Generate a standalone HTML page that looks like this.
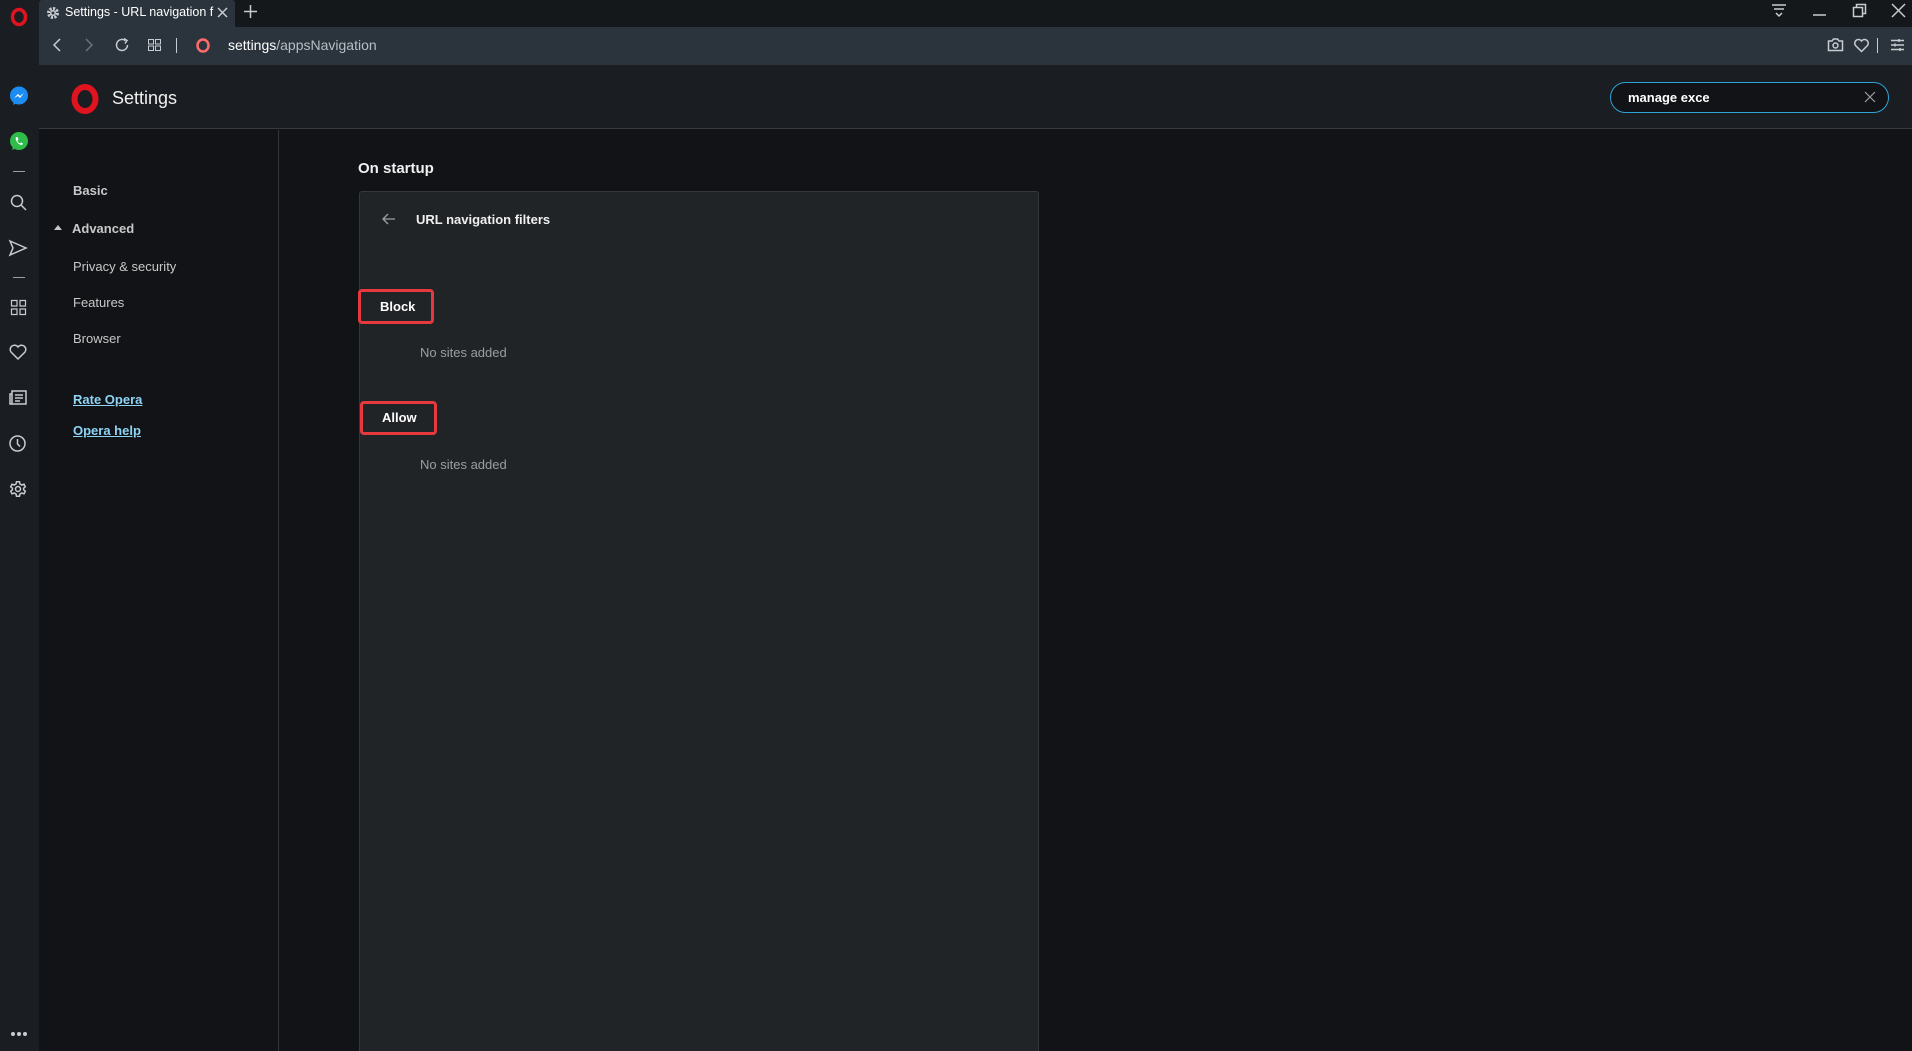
<!DOCTYPE html>
<html style="background:#111316"><head><meta charset="utf-8"><style>
*{margin:0;padding:0;box-sizing:border-box}
body{width:1912px;height:1051px;overflow:hidden;background:#111316;font-family:"Liberation Sans",sans-serif;color:#e8e8e8;position:relative}
.a{position:absolute}
svg{position:absolute;overflow:visible}
.ic{stroke:#c8ccd0;fill:none;stroke-width:1.5}
.nav{position:absolute;left:73px;font-size:13px;color:#c8c8c8;font-weight:bold}
.lnk{color:#8fd3f5;text-decoration:underline}
.box{position:absolute;border:3px solid #e5393e;border-radius:4px;font-size:13px;font-weight:bold;color:#fff;padding-left:19px;line-height:27px}
.ns{position:absolute;left:420px;font-size:13px;color:#9a9ea2}
</style></head><body>
<div class="a" style="left:0;top:0;width:39px;height:1051px;background:#1a1d21"></div>
<div class="a" style="left:39px;top:0;width:1873px;height:27px;background:#15181b"></div>
<div class="a" style="left:39px;top:0;width:196px;height:27px;background:#2b343d;border-radius:3px 3px 0 0"></div>
<svg style="left:46px;top:6px" width="14" height="14" viewBox="0 0 14 14"><circle cx="7" cy="7" r="4.5" fill="none" stroke="#c8ccd0" stroke-width="3" stroke-dasharray="2.2 1.3"/><circle cx="7" cy="7" r="3" fill="#c8ccd0"/><circle cx="7" cy="7" r="1.5" fill="#2b343d"/></svg>
<div class="a" style="left:65px;top:5px;font-size:12.5px;color:#fff;white-space:nowrap;width:150px;overflow:hidden">Settings - URL navigation f</div>
<svg style="left:217px;top:7px" width="11" height="11"><path d="M1 1L10 10M10 1L1 10" class="ic"/></svg>
<svg style="left:244px;top:5px" width="13" height="13"><path d="M6.5 0V13M0 6.5H13" class="ic"/></svg>
<svg style="left:1772px;top:4px" width="14" height="14"><path d="M0 1H14M2 5H12M4 9L7 12L10 9" class="ic"/></svg>
<svg style="left:1813px;top:10px" width="14" height="6"><path d="M0 5H13" class="ic"/></svg>
<svg style="left:1853px;top:4px" width="13" height="13"><path d="M0.5 3.5H9.5V12.5H0.5Z M3.5 3.5V0.5H12.5V9.5H9.5" class="ic"/></svg>
<svg style="left:1892px;top:4px" width="13" height="13"><path d="M0 0L13 13M13 0L0 13" class="ic"/></svg>
<div class="a" style="left:39px;top:27px;width:1873px;height:38px;background:#2b343d"></div>
<svg style="left:53px;top:38px" width="8" height="14"><path d="M7 1L1 7L7 13" class="ic"/></svg>
<svg style="left:85px;top:38px" width="8" height="14"><path d="M1 1L7 7L1 13" stroke="#6a7178" fill="none" stroke-width="1.5"/></svg>
<svg style="left:115px;top:38px" width="14" height="14"><path d="M12.5 7A5.5 5.5 0 1 1 10.5 2.7" class="ic"/><path d="M9 0.5L12 2.5L10 5.5" class="ic"/></svg>
<svg style="left:148px;top:39px" width="13" height="12"><path d="M0.5 0.5H5.5V5H0.5ZM7.5 0.5H12.5V5H7.5ZM0.5 7H5.5V11.5H0.5ZM7.5 7H12.5V11.5H7.5Z" stroke="#c8ccd0" fill="none" stroke-width="1"/></svg>
<div class="a" style="left:176px;top:38px;width:1px;height:15px;background:#c8ccd0"></div>
<svg style="left:196px;top:38px" width="14" height="15"><ellipse cx="7" cy="7.5" rx="5.5" ry="6" fill="none" stroke="#ff6b6b" stroke-width="2.5"/></svg>
<div class="a" style="left:228px;top:37px;font-size:14px;color:#fff">settings<span style="color:#b8bec4">/appsNavigation</span></div>
<svg style="left:1828px;top:38px" width="15" height="13"><path d="M0.5 3H4L5.5 1H9.5L11 3H14.5V12.5H0.5Z" class="ic" stroke-width="1.2"/><circle cx="7.5" cy="7.5" r="2.5" class="ic" stroke-width="1.2"/></svg>
<svg style="left:1854px;top:39px" width="15" height="13"><path d="M7.5 12.5L1.5 6.5A3.3 3.3 0 0 1 7.5 2A3.3 3.3 0 0 1 13.5 6.5Z" class="ic" stroke-width="1.2"/></svg>
<div class="a" style="left:1877px;top:38px;width:1px;height:15px;background:#c8ccd0"></div>
<svg style="left:1891px;top:39px" width="13" height="12"><path d="M0 1.5H13M0 6H13M0 10.5H13M8 0V3M4 4.5V7.5M9 9V12" class="ic" stroke-width="1.1"/></svg>
<svg style="left:9px;top:7px" width="20" height="20"><ellipse cx="10" cy="10" rx="6.5" ry="7.5" fill="none" stroke="#e0141e" stroke-width="3.5"/></svg>
<svg style="left:9px;top:86px" width="20" height="20"><circle cx="10" cy="9.5" r="9" fill="#1b8cf2"/><path d="M5 15L4 19L8 17Z" fill="#1b8cf2"/><path d="M5 12L9 8L11 10L15 7L11 12L9 10Z" fill="#fff"/></svg>
<svg style="left:9px;top:131px" width="20" height="20"><circle cx="10" cy="10" r="9" fill="#2fbc4a"/><path d="M3 19L4.5 14.5L8 17Z" fill="#2fbc4a"/><path d="M7 6Q6 8 8 11Q10 14 13 14L14 12.5L12 11.5L11 12.5Q9 11.5 8.5 9.5L9.5 8.5L8.5 6Z" fill="#fff"/></svg>
<div class="a" style="left:13px;top:171px;width:12px;height:1px;background:#9aa0a6"></div>
<svg style="left:10px;top:194px" width="18" height="18"><circle cx="7" cy="7" r="5.5" class="ic"/><path d="M11 11L16 16" class="ic" stroke-width="2"/></svg>
<svg style="left:9px;top:240px" width="18" height="16"><path d="M1 1L17 8L1 15L4 8Z" class="ic" stroke-width="1.3"/></svg>
<div class="a" style="left:13px;top:277px;width:12px;height:1px;background:#9aa0a6"></div>
<svg style="left:11px;top:300px" width="15" height="15"><path d="M0.5 0.5H6V6H0.5ZM9 0.5H14.5V6H9ZM0.5 9H6V14.5H0.5ZM9 9H14.5V14.5H9Z" stroke="#c8ccd0" fill="none" stroke-width="1.2"/></svg>
<svg style="left:9px;top:344px" width="18" height="16"><path d="M9 15L2 8A4 4 0 0 1 9 3A4 4 0 0 1 16 8Z" class="ic" stroke-width="1.3"/></svg>
<svg style="left:9px;top:390px" width="18" height="15"><path d="M3 1H17V14H1V4H3ZM3 4V14M6 5H14M6 8H14M6 11H11" class="ic" stroke-width="1.2"/></svg>
<svg style="left:9px;top:435px" width="17" height="17"><circle cx="8.5" cy="8.5" r="7.5" class="ic" stroke-width="1.3"/><path d="M8.5 4V9L11 11.5" class="ic" stroke-width="1.3"/></svg>
<svg style="left:10px;top:481px" width="16" height="16" viewBox="0 0 16 16"><path d="M6.5 0.8H9.5L10 3L11.8 4L14 3.2L15.3 5.8L13.6 7.2V8.8L15.3 10.2L14 12.8L11.8 12L10 13L9.5 15.2H6.5L6 13L4.2 12L2 12.8L0.7 10.2L2.4 8.8V7.2L0.7 5.8L2 3.2L4.2 4L6 3Z" class="ic" stroke-width="1.2"/><circle cx="8" cy="8" r="2.5" class="ic" stroke-width="1.2"/></svg>
<div class="a" style="left:11px;top:1032px;width:4px;height:4px;border-radius:2px;background:#c8ccd0;box-shadow:6px 0 #c8ccd0,12px 0 #c8ccd0"></div>
<div class="a" style="left:39px;top:65px;width:1873px;height:64px;background:#1a1d21;border-bottom:1px solid #383b3e"></div>
<svg style="left:70px;top:84px" width="30" height="30"><ellipse cx="15" cy="15" rx="10.5" ry="12" fill="none" stroke="#e0141e" stroke-width="6"/></svg>
<div class="a" style="left:112px;top:88px;font-size:18px;color:#f0f0f0">Settings</div>
<div class="a" style="left:1610px;top:82px;width:279px;height:31px;border:1px solid #2fa3d6;border-radius:16px;background:#111316"></div>
<div class="a" style="left:1628px;top:90px;font-size:13px;font-weight:bold;color:#fff">manage exce</div>
<svg style="left:1865px;top:92px" width="10" height="10"><path d="M0 0L10 10M10 0L0 10" stroke="#9aa0a6" stroke-width="1.2"/></svg>
<div class="a" style="left:278px;top:130px;width:1px;height:921px;background:#333639"></div>
<div class="nav" style="top:183px">Basic</div>
<svg style="left:54px;top:225px" width="8" height="5"><path d="M0 5L4 0L8 5Z" fill="#c8c8c8"/></svg>
<div class="nav" style="left:72px;top:221px">Advanced</div>
<div class="nav" style="top:259px;font-weight:normal">Privacy &amp; security</div>
<div class="nav" style="top:295px;font-weight:normal">Features</div>
<div class="nav" style="top:331px;font-weight:normal">Browser</div>
<div class="nav lnk" style="top:392px">Rate Opera</div>
<div class="nav lnk" style="top:423px">Opera help</div>
<div class="a" style="left:358px;top:160px;font-size:15px;font-weight:bold;color:#f0f0f0">On startup</div>
<div class="a" style="left:359px;top:191px;width:680px;height:860px;background:#212427;border:1px solid #35383b;border-bottom:none;border-radius:3px 3px 0 0"></div>
<svg style="left:382px;top:213px" width="14" height="12"><path d="M13 6H1M6 1L1 6L6 11" stroke="#9aa0a6" fill="none" stroke-width="1.3"/></svg>
<div class="a" style="left:416px;top:212px;font-size:13px;font-weight:bold;color:#f0f0f0">URL navigation filters</div>
<div class="box" style="left:358px;top:289px;width:76px;height:35px;line-height:29px">Block</div>
<div class="ns" style="top:345px">No sites added</div>
<div class="box" style="left:360px;top:401px;width:77px;height:34px;line-height:28px">Allow</div>
<div class="ns" style="top:457px">No sites added</div>
</body></html>
